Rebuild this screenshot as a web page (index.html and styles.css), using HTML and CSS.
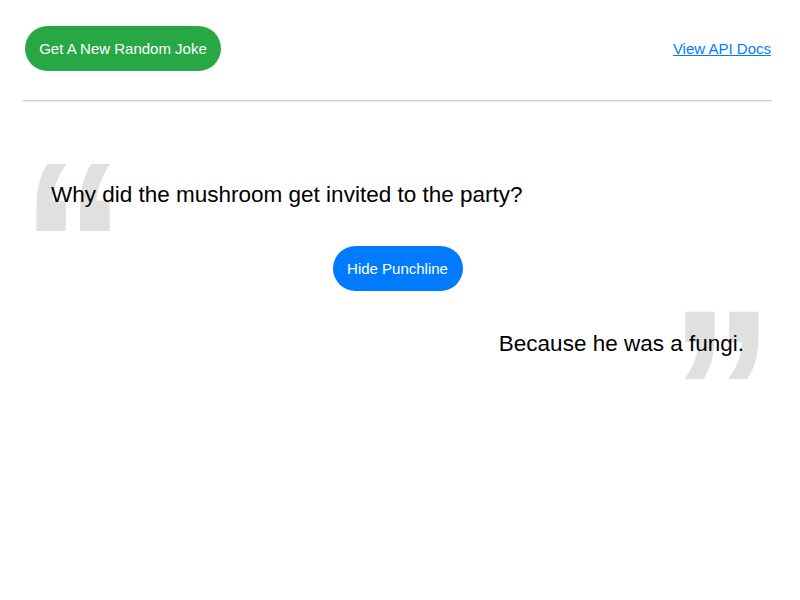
FILE: index.html
```html
<!DOCTYPE html>
<html lang="en">
<head>
<meta charset="utf-8">
<title>Random Joke</title>
<link rel="stylesheet" href="styles.css">
</head>
<body>
<div class="page">
  <header class="header">
    <button class="btn btn-green" type="button">Get A New Random Joke</button>
    <a class="docs-link" href="#">View API Docs</a>
  </header>
  <hr class="rule">
  <main class="joke">
    <div class="setup">
      <span class="quote quote-open" aria-hidden="true">&ldquo;</span>
      <p class="setup-text">Why did the mushroom get invited to the party?</p>
    </div>
    <div class="actions">
      <button class="btn btn-blue" type="button">Hide Punchline</button>
    </div>
    <div class="punch">
      <span class="quote quote-close" aria-hidden="true">&rdquo;</span>
      <p class="punch-text">Because he was a fungi.</p>
    </div>
  </main>
</div>
</body>
</html>
```
FILE: styles.css
```css
html, body {
  margin: 0;
  padding: 0;
  background: #fff;
  height: 100%;
}
body {
  font-family: "Liberation Sans", Arial, sans-serif;
  color: #000;
}
.page {
  box-sizing: border-box;
  min-height: 100%;
  padding: 26px 28px 0 23px;
}
.header {
  display: flex;
  align-items: center;
  justify-content: space-between;
  padding: 0 1px 0 2px;
}
.btn {
  height: 45px;
  border: 0;
  border-radius: 23px;
  color: #fff;
  font-family: "Liberation Sans", Arial, sans-serif;
  font-size: 15px;
  padding: 0;
  white-space: nowrap;
  cursor: pointer;
}
.btn-green {
  background: #28a745;
  width: 196px;
}
.btn-blue {
  background: #007bff;
  width: 130px;
}
.docs-link {
  color: #007bff;
  font-size: 15px;
  text-decoration: underline;
}
.rule {
  margin: 29px 0 0;
  height: 0;
  border: 0;
  border-top: 1px solid #cfcfcf;
  border-bottom: 1px solid #ececec;
}
.joke {
  padding: 80px 0 60px;
}
.setup, .punch {
  position: relative;
}
.setup-text, .punch-text {
  position: relative;
  margin: 0;
  font-size: 22.5px;
  line-height: 26px;
}
.setup-text {
  padding-left: 28px;
}
.punch-text {
  text-align: right;
  padding-right: 28px;
}
.quote {
  position: absolute;
  color: #e0e0e0;
  font-family: "Liberation Sans", Arial, sans-serif;
  font-weight: bold;
  font-size: 209px;
  line-height: 1;
  transform-origin: 0 0;
  transform: scaleY(1.14);
}
.quote-open {
  left: -2px;
  top: -56px;
}
.quote-close {
  right: -2px;
  top: -58px;
}
.actions {
  display: flex;
  justify-content: center;
  margin-top: 38px;
}
.punch {
  margin-top: 40px;
}
```
